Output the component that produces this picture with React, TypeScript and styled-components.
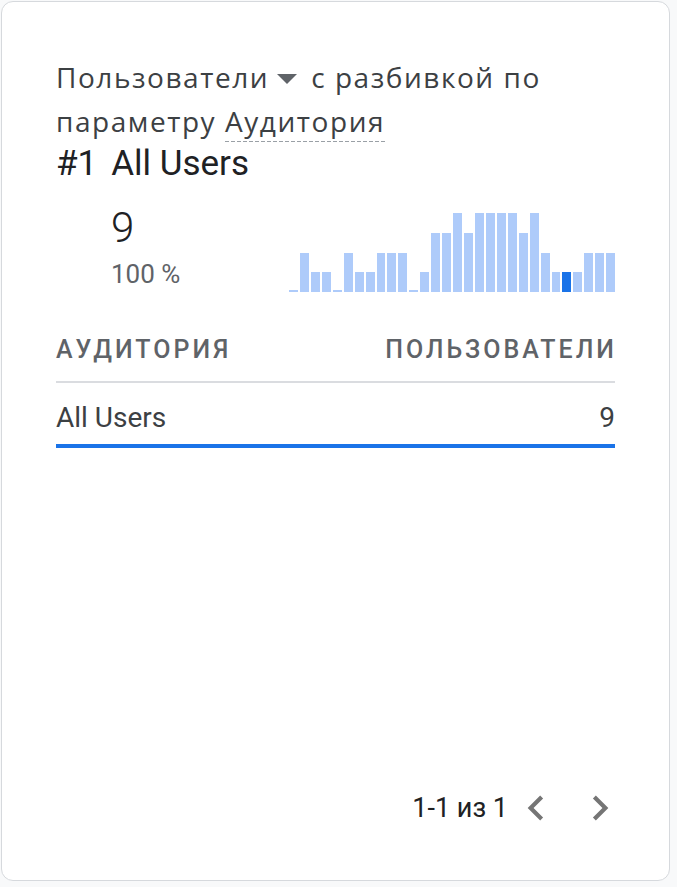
import React from "react";
import styled, { createGlobalStyle } from "styled-components";

const GlobalStyle = createGlobalStyle`
  html, body { margin: 0; padding: 0; background: #f8f9fa; }
  body { font-family: Roboto, "Noto Sans", Arial, sans-serif; }
  * { box-sizing: border-box; }
`;

const Card = styled.div`
  margin: 1px 0 0 1px;
  width: 669px;
  height: 880px;
  background: #fff;
  border: 1px solid #d6d9dd;
  border-radius: 12px;
  padding: 53px 54px 47px;
  display: flex;
  flex-direction: column;
`;

const Title = styled.div`
  font-family: "Open Sans", Roboto, sans-serif;
  font-size: 28px;
  line-height: 44px;
  letter-spacing: 1.55px;
  color: #3c4043;
`;

const Caret = styled.svg`
  width: 20px;
  height: 10px;
  margin: 0 14px 0 8px;
  vertical-align: 4px;
`;

const Dimension = styled.span`
  padding-bottom: 2px;
  background-image: linear-gradient(to right, #9aa0a6 0 4px, transparent 4px 6px);
  background-size: 6px 1px;
  background-repeat: repeat-x;
  background-position: left bottom;
`;

const TopItem = styled.div`
  font-size: 35px;
  line-height: 40px;
  color: #202124;
  display: flex;
  gap: 14px;
  margin-top: 1px;
`;

const StatsRow = styled.div`
  display: flex;
  justify-content: space-between;
  align-items: flex-start;
  margin-top: 20px;
`;

const Stats = styled.div`
  padding-left: 55px;
  display: flex;
  flex-direction: column;
`;

const BigValue = styled.div`
  font-size: 42px;
  line-height: 48px;
  font-weight: 300;
  color: #202124;
`;

const Share = styled.div`
  margin-top: 6px;
  font-size: 26px;
  line-height: 32px;
  color: #5f6368;
`;

const Chart = styled.div`
  width: 326px;
  height: 88px;
  display: flex;
  align-items: flex-end;
  gap: 2px;
`;

const Bar = styled.div<{ $active?: boolean }>`
  flex: 1;
  background: ${(p) => (p.$active ? "#1a73e8" : "#aecbfa")};
`;

const HeaderRow = styled.div`
  margin-top: 42px;
  display: flex;
  justify-content: space-between;
  font-size: 25px;
  line-height: 32px;
  font-weight: 500;
  letter-spacing: 3px;
  color: #5f6368;
  text-transform: uppercase;
  padding-bottom: 15px;
  border-bottom: 2px solid #dadce0;
  span:last-child { margin-right: -2px; }
`;

const DataRow = styled.div`
  display: flex;
  justify-content: space-between;
  font-size: 28px;
  line-height: 36px;
  color: #3c4043;
  padding: 17px 0 8px;
  border-bottom: 4px solid #1a73e8;
`;

const Pagination = styled.div`
  margin-top: auto;
  margin-right: -10px;
  display: flex;
  justify-content: flex-end;
  align-items: center;
  font-size: 27px;
  color: #202124;
`;

const PageLabel = styled.span`
  margin-right: 3px;
`;

const PageButton = styled.button`
  width: 50px;
  height: 50px;
  padding: 0;
  border: none;
  background: none;
  display: flex;
  & + & { margin-left: 14px; }
  svg { width: 50px; height: 50px; fill: #757575; }
`;

const values = [0, 2, 1, 1, 0, 2, 1, 1, 2, 2, 2, 0, 1, 3, 3, 4, 3, 4, 4, 4, 4, 3, 4, 2, 1, 1, 1, 2, 2, 2];
const activeIndex = 25;

export default function App() {
  return (
    <>
      <GlobalStyle />
      <Card>
        <Title>
          <span>Пользователи</span>
          <Caret viewBox="7 10 10 5">
            <path d="M7 10l5 5 5-5z" fill="#5f6368" />
          </Caret>
          <span>с разбивкой по</span> <span>параметру</span> <Dimension>Аудитория</Dimension>
        </Title>
        <TopItem>
          <span>#1</span>
          <span>All Users</span>
        </TopItem>
        <StatsRow>
          <Stats>
            <BigValue>9</BigValue>
            <Share>100 %</Share>
          </Stats>
          <Chart>
            {values.map((v, i) => (
              <Bar key={i} $active={i === activeIndex} style={{ height: v === 0 ? 2 : v * 19.75 }} />
            ))}
          </Chart>
        </StatsRow>
        <HeaderRow>
          <span>Аудитория</span>
          <span>Пользователи</span>
        </HeaderRow>
        <DataRow>
          <span>All Users</span>
          <span>9</span>
        </DataRow>
        <Pagination>
          <PageLabel>1-1 из 1</PageLabel>
          <PageButton aria-label="Назад">
            <svg viewBox="0 0 24 24"><path d="M15.41 7.41L14 6l-6 6 6 6 1.41-1.41L10.83 12z" /></svg>
          </PageButton>
          <PageButton aria-label="Вперёд">
            <svg viewBox="0 0 24 24"><path d="M10 6L8.59 7.41 13.17 12l-4.58 4.59L10 18l6-6z" /></svg>
          </PageButton>
        </Pagination>
      </Card>
    </>
  );
}
